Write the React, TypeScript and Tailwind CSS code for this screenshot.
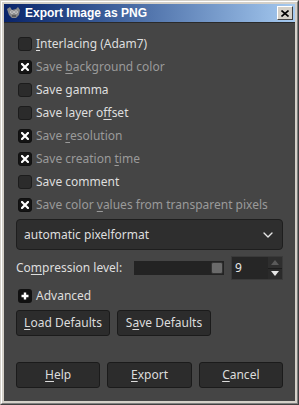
import { ChevronDown } from 'lucide-react';
import { clsx } from 'clsx';

type Opt = { pre: string; key: string; post: string; checked: boolean };

const options: Opt[] = [
    { pre: '', key: 'I', post: 'nterlacing (Adam7)', checked: false },
    { pre: 'Save ', key: 'b', post: 'ackground color', checked: true },
    { pre: 'Save gamma', key: '', post: '', checked: false },
    { pre: 'Save layer o', key: 'f', post: 'fset', checked: false },
    { pre: 'Save ', key: 'r', post: 'esolution', checked: true },
    { pre: 'Save creation ', key: 't', post: 'ime', checked: true },
    { pre: 'Save comment', key: '', post: '', checked: false },
    { pre: 'Save color ', key: 'v', post: 'alues from transparent pixels', checked: true },
];

function Check({ checked }: { checked: boolean }) {
    return (
        <div
            className={clsx(
                'w-[14px] h-[14px] rounded-[3px] border flex items-center justify-center shrink-0',
                checked ? 'bg-[#141414] border-[#101010]' : 'bg-[#2b2b2b] border-[#1c1c1c]'
            )}
        >
            {checked && (
                <svg width="8" height="8" viewBox="0 0 8 8">
                    <path d="M1 1 L7 7 M7 1 L1 7" stroke="#ffffff" strokeWidth="2.2" strokeLinecap="square" />
                </svg>
            )}
        </div>
    );
}

function Mn({ pre, k, post }: { pre: string; k: string; post: string }) {
    return (
        <span className="whitespace-nowrap">
            {pre}
            {k && <u className="underline underline-offset-2 decoration-1">{k}</u>}
            {post}
        </span>
    );
}

function Btn({ pre, k, post, w }: { pre: string; k: string; post: string; w: string }) {
    return (
        <div
            className={clsx(
                'h-[26px] rounded-[3px] bg-[#2c2c2c] border border-[#1b1b1b] flex items-center justify-center text-[#dcdcdc]',
                w
            )}
        >
            <Mn pre={pre} k={k} post={post} />
        </div>
    );
}

export default function App() {
    return (
        <div
            className="w-[299px] h-[405px] bg-[#d4d0c8] border-t border-l border-t-[#d4d0c8] border-l-[#d4d0c8] border-r border-b border-r-[#404040] border-b-[#404040] flex flex-col"
            style={{ fontFamily: '"Noto Sans", "DejaVu Sans", sans-serif' }}
        >
            <div className="flex-1 flex flex-col border-t border-l border-white border-r border-b border-r-[#808080] border-b-[#808080] p-[2px]">
                {/* title bar */}
                <div className="h-[18px] bg-gradient-to-r from-[#0a246a] to-[#a6caf0] flex items-center pl-[2px] pr-[2px]">
                    <svg width="16" height="14" viewBox="0 0 16 14" className="shrink-0">
                        <path d="M1 3 L4 1 L6 4 L10 3 L12 1 L14 4 L13 9 L10 12 L6 12 L3 9 Z" fill="#8a8a8a" />
                        <circle cx="6" cy="6" r="1.6" fill="#ffffff" />
                        <circle cx="10" cy="6" r="1.6" fill="#ffffff" />
                        <circle cx="6" cy="6" r="0.7" fill="#000" />
                        <circle cx="10" cy="6" r="0.7" fill="#000" />
                        <path d="M6 10 L10 10" stroke="#333" strokeWidth="1" />
                    </svg>
                    <span
                        className="ml-[3px] text-white font-bold text-[12px] leading-none"
                        style={{ fontFamily: '"Liberation Sans", Arial, sans-serif' }}
                    >
                        Export Image as PNG
                    </span>
                    <div className="ml-auto w-[16px] h-[14px] bg-[#d4d0c8] border-t border-l border-white border-r border-b border-r-[#404040] border-b-[#404040] flex items-center justify-center">
                        <svg width="8" height="7" viewBox="0 0 8 7">
                            <path d="M0.5 0.5 L7.5 6.5 M7.5 0.5 L0.5 6.5" stroke="#000" strokeWidth="1.6" />
                        </svg>
                    </div>
                </div>

                {/* client area */}
                <div className="flex-1 bg-[#454545] border-t border-[#2a2a2a] px-[12px] pt-[9px] text-[12px] leading-none">
                    <div className="flex flex-col">
                        {options.map((o, i) => {
                            const dim = o.checked;
                            return (
                                <div key={i} className="h-[23px] flex items-center gap-[4px] pl-[2px]">
                                    <Check checked={o.checked} />
                                    <span className={dim ? 'text-[#9a9a9a]' : 'text-[#dedede]'}>
                                        <Mn pre={o.pre} k={o.key} post={o.post} />
                                    </span>
                                </div>
                            );
                        })}
                    </div>

                    {/* pixel format combo */}
                    <div className="mt-[3px] h-[31px] rounded-[4px] bg-[#2e2e2e] border border-[#1e1e1e] flex items-center pl-[7px] pr-[6px] text-[#dedede]">
                        <span>automatic pixelformat</span>
                        <ChevronDown className="ml-auto w-[16px] h-[16px] text-[#e6e6e6]" strokeWidth={2} />
                    </div>

                    {/* compression */}
                    <div className="mt-[6px] h-[24px] flex items-center text-[#dedede]">
                        <span>
                            Co<u className="underline underline-offset-2 decoration-1">m</u>pression level:
                        </span>
                        <div className="ml-[12px] w-[90px] h-[14px] bg-[#232323] flex items-center justify-end pr-[1px]">
                            <div className="w-[12px] h-[12px] rounded-[2px] bg-[#6a6a6a] border border-[#333]" />
                        </div>
                        <div className="ml-auto w-[52px] h-[24px] flex bg-[#2f2f2f] border border-[#3a3a3a]">
                            <div className="flex-1 bg-[#262626] flex items-center pl-[3px] text-[#e8e8e8]">9</div>
                            <div className="w-[14px] flex flex-col">
                                <div className="flex-1 bg-[#2e2e2e] border-b border-[#1c1c1c] flex items-center justify-center">
                                    <svg width="8" height="5" viewBox="0 0 8 5">
                                        <path d="M0 5 L4 0 L8 5 Z" fill="#5a5a5a" />
                                    </svg>
                                </div>
                                <div className="flex-1 bg-[#2a2a2a] flex items-center justify-center">
                                    <svg width="8" height="5" viewBox="0 0 8 5">
                                        <path d="M0 0 L8 0 L4 5 Z" fill="#e6e6e6" />
                                    </svg>
                                </div>
                            </div>
                        </div>
                    </div>

                    {/* expander */}
                    <div className="mt-[7px] h-[18px] flex items-center gap-[4px] pl-[2px] text-[#dedede]">
                        <div className="w-[14px] h-[14px] rounded-[3px] bg-[#111] flex items-center justify-center">
                            <svg width="8" height="8" viewBox="0 0 8 8">
                                <path d="M4 0.5 V7.5 M0.5 4 H7.5" stroke="#fff" strokeWidth="2.4" />
                            </svg>
                        </div>
                        <span>Advanced</span>
                    </div>

                    <div className="mt-[5px] flex gap-[7px]">
                        <Btn pre="" k="L" post="oad Defaults" w="w-[94px]" />
                        <Btn pre="S" k="a" post="ve Defaults" w="w-[94px]" />
                    </div>

                    <div className="mt-[26px] flex gap-[7px]">
                        <Btn pre="" k="H" post="elp" w="w-[85px]" />
                        <Btn pre="" k="E" post="xport" w="w-[85px]" />
                        <Btn pre="" k="C" post="ancel" w="w-[85px]" />
                    </div>
                </div>
            </div>
        </div>
    );
}
